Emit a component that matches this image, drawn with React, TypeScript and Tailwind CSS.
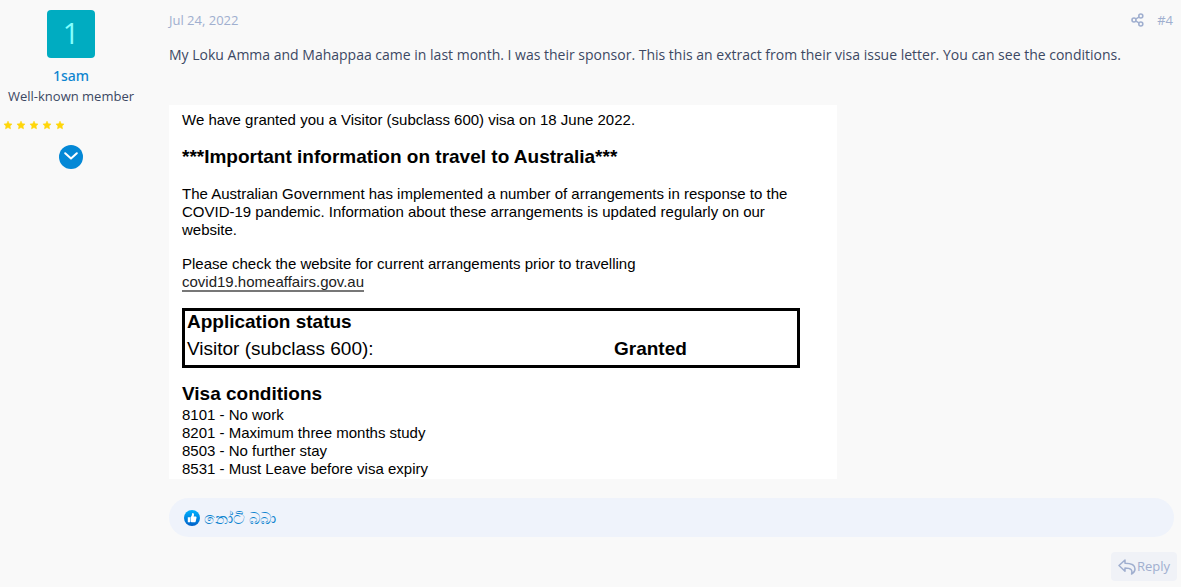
import React from "react";

const conditions = [
  "8101 - No work",
  "8201 - Maximum three months study",
  "8503 - No further stay",
  "8531 - Must Leave before visa expiry",
];

function Star() {
  return (
    <svg viewBox="0 0 26 26" className="h-[10px] w-[10px]" fill="#ffd60a" stroke="#ffd60a" strokeWidth="1.500" strokeLinejoin="round" aria-hidden="true">
      <path d="M13 3l3.200 6.600 7.300 1-5.300 5.100 1.300 7.200L13 19.500l-6.500 3.400 1.300-7.200-5.300-5.100 7.300-1z" />
    </svg>
  );
}

function ShareIcon() {
  return (
    <svg viewBox="0 0 13 14" className="h-[14px] w-[13px]" fill="none" stroke="currentColor" strokeWidth="1.600" aria-hidden="true">
      <circle cx="3" cy="7" r="2" />
      <circle cx="9.800" cy="3" r="2" />
      <circle cx="9.800" cy="11" r="2" />
      <path d="M4.900 5.900L8 4.100M4.900 8.100L8 9.900" />
    </svg>
  );
}

function ReplyIcon() {
  return (
    <svg viewBox="0 0 18 16" className="h-4 w-[18px]" fill="none" stroke="currentColor" strokeWidth="1.500" strokeLinejoin="round" aria-hidden="true">
      <path d="M1 6.500L7 1V4.200C12.500 4.200 17 5.200 17 9.900C17 12 15.800 13.700 13.600 15C14.600 11.200 13.200 9 7 9V12.200Z" />
    </svg>
  );
}

function LikeIcon() {
  return (
    <svg viewBox="0 0 16 16" className="h-4 w-4" aria-hidden="true">
      <defs>
        <linearGradient id="like" x1="0" y1="0" x2="0" y2="1">
          <stop offset="0" stopColor="#00b2ff" />
          <stop offset="1" stopColor="#0060c8" />
        </linearGradient>
      </defs>
      <circle cx="8" cy="8" r="8" fill="url(#like)" />
      <path fill="#fff" d="M3.800 7.300h2.200v5H3.800zM6.500 7.200C7.600 6.400 8 5.400 8 3.800c0-.5.4-.8.8-.8.8 0 1.200.8 1.200 1.700 0 .7-.2 1.300-.4 1.900h2c.7 0 1.100.6.9 1.200l-.8 3.600c-.1.500-.6.900-1.100.9H7.700c-.5 0-.9-.2-1.200-.5z" />
    </svg>
  );
}

export default function App() {
  return (
    <article className="flex min-h-screen bg-[#f9f9f9] font-['Open_Sans','Noto_Sans',sans-serif] text-[#3c4863]">
      <aside className="flex w-[142px] shrink-0 flex-col items-center pt-[10px]">
        <a href="#member" className="flex h-12 w-12 items-center justify-center rounded bg-[#00acc1] pb-1 text-[29px] leading-none text-[#84ffff]">
          1
        </a>
        <a href="#member" className="mt-2 font-['Noto_Sans',sans-serif] text-sm leading-5 font-medium text-[#0f85d0]">1sam</a>
        <p className="text-[13px] leading-5 whitespace-nowrap">Well-known member</p>
        <div className="mt-[14px] flex gap-[3px] self-start pl-[3px]" role="img" aria-label="Five stars">
          <Star />
          <Star />
          <Star />
          <Star />
          <Star />
        </div>
        <button type="button" aria-label="Show member details" className="mt-[15px] flex h-6 w-6 items-center justify-center rounded-full bg-[#0488d6] text-white">
          <svg viewBox="0 0 14 8" className="mb-[2px] h-2 w-[14px]" fill="none" stroke="currentColor" strokeWidth="2" strokeLinecap="round" strokeLinejoin="round" aria-hidden="true">
            <path d="M1.200 1.200L7 6.600L12.800 1.200" />
          </svg>
        </button>
      </aside>

      <div className="flex min-w-0 flex-1 flex-col pt-[10px] pr-1 pl-[27px]">
        <header className="flex items-center justify-between pr-1 text-[13px] leading-5 text-[#a0afcf]">
          <a href="#post"><time dateTime="2022-07-24">Jul 24, 2022</time></a>
          <div className="flex items-center gap-[13px]">
            <a href="#share" aria-label="Share"><ShareIcon /></a>
            <a href="#post">#4</a>
          </div>
        </header>

        <p className="mt-[14px] text-sm leading-[22px]">
          My Loku Amma and Mahappaa came in last month. I was their sponsor. This this an extract from their visa issue letter. You can see the conditions.
        </p>

        <section className="mt-[39px] w-full max-w-[668px] bg-white px-[13px] pt-[6px] pb-px font-['Liberation_Sans',Arial,sans-serif] text-[15px] leading-[18px] text-black">
          <p>We have granted you a Visitor (subclass 600) visa on 18 June 2022.</p>
          <h2 className="mt-4 text-[19px] leading-6 font-bold">***Important information on travel to Australia***</h2>
          <p className="mt-4 max-w-[620px]">
            The Australian Government has implemented a number of arrangements in response to the COVID-19 pandemic. Information about these arrangements is updated regularly on our website.
          </p>
          <p className="mt-4">Please check the website for current arrangements prior to travelling</p>
          <a href="#covid19" className="inline-block border-b-2 border-[#777] leading-4 text-[#222]">covid19.homeaffairs.gov.au</a>
          <div className="mt-4 mr-6 border-[3px] border-black pl-[2px] text-[19px]">
            <h3 className="leading-[22px] font-bold">Application status</h3>
            <div className="grid grid-cols-[427px_1fr] leading-8">
              <span>Visitor (subclass 600):</span>
              <strong>Granted</strong>
            </div>
          </div>
          <h3 className="mt-[14px] text-[19px] leading-6 font-bold">Visa conditions</h3>
          <ul>
            {conditions.map((c) => (
              <li key={c}>{c}</li>
            ))}
          </ul>
        </section>

        <div className="mt-[19px] mr-[3px] flex h-[39px] items-center gap-1 rounded-full bg-[#eff3fb] px-[15px]">
          <LikeIcon />
          <a href="#reactions" className="text-base leading-5 text-[#0f85d0]">නෝටි බබා</a>
        </div>

        <button type="button" className="mt-[15px] flex h-[29px] items-center gap-px self-end rounded bg-[#f0f2f7] px-[7px] text-[13px] text-[#a0afcf]">
          <ReplyIcon />
          Reply
        </button>
      </div>
    </article>
  );
}
